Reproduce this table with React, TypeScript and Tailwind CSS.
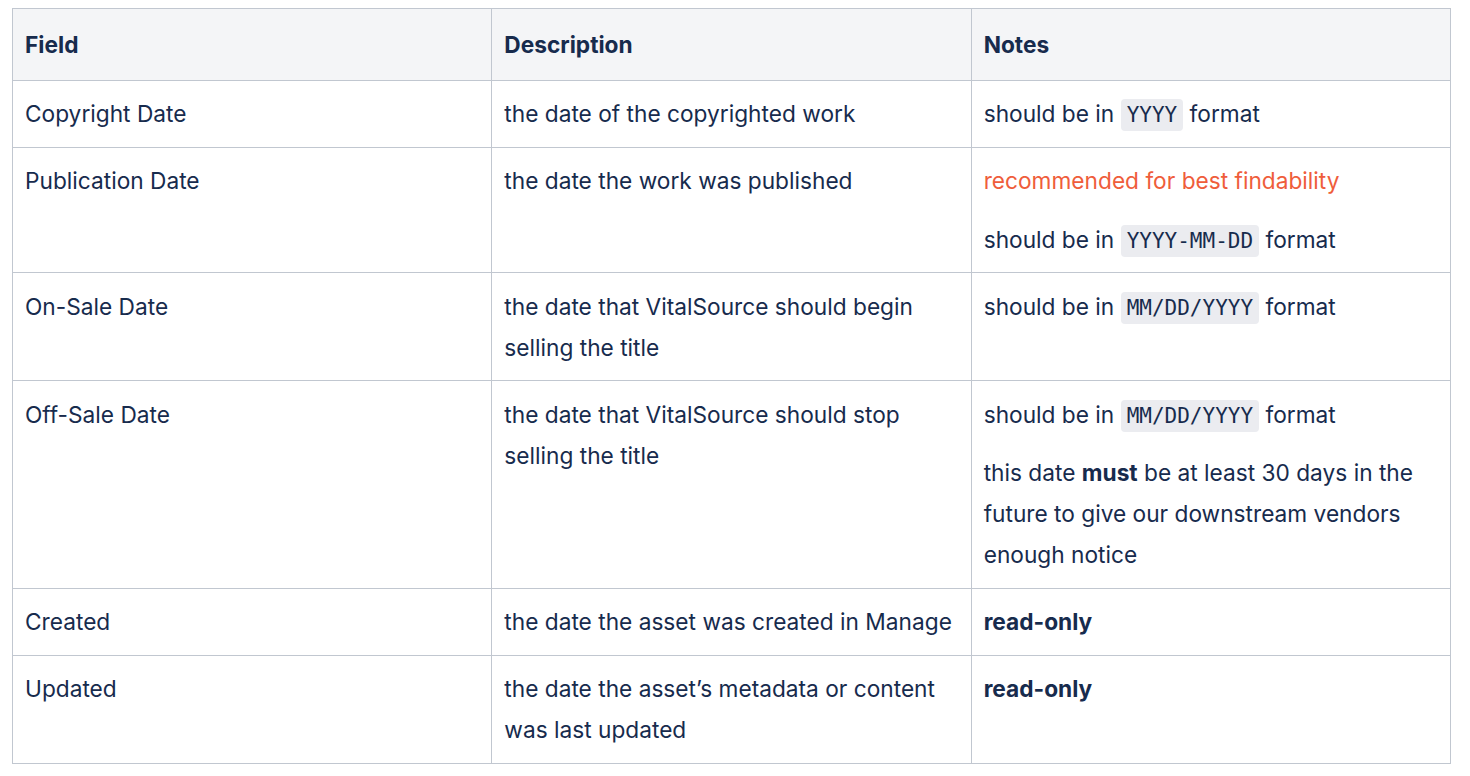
import React from 'react'

// Таблица полей с датами — документация метаданных
const Code = ({ children }: { children: React.ReactNode }) => (
  <code className="rounded-[4px] bg-[#ebecf0] px-[6px] py-[4px] font-['DejaVu_Sans_Mono',monospace] text-[21px] leading-none text-[#172b4d]">
    {children}
  </code>
)

const th = 'border border-[#c1c7d0] bg-[#f4f5f7] px-[12px] py-[14.75px] text-left font-bold'
const td = 'border border-[#c1c7d0] px-[12px] py-[12.5px] align-top'

export default function App() {
  const rows: { field: string; desc: React.ReactNode; notes: React.ReactNode }[] = [
    {
      field: 'Copyright Date',
      desc: 'the date of the copyrighted work',
      notes: (
        <p>
          should be in <Code>YYYY</Code> format
        </p>
      ),
    },
    {
      field: 'Publication Date',
      desc: 'the date the work was published',
      notes: (
        <>
          <p className="text-[#ef5d3b]">recommended for best findability</p>
          <p className="mt-[17.5px]">
            should be in <Code>YYYY-MM-DD</Code> format
          </p>
        </>
      ),
    },
    {
      field: 'On-Sale Date',
      desc: 'the date that VitalSource should begin selling the title',
      notes: (
        <p>
          should be in <Code>MM/DD/YYYY</Code> format
        </p>
      ),
    },
    {
      field: 'Off-Sale Date',
      desc: 'the date that VitalSource should stop selling the title',
      notes: (
        <>
          <p>
            should be in <Code>MM/DD/YYYY</Code> format
          </p>
          <p className="mt-[17.5px]">
            this date <strong>must</strong> be at least 30 days in the future to give our downstream
            vendors enough notice
          </p>
        </>
      ),
    },
    {
      field: 'Created',
      desc: 'the date the asset was created in Manage',
      notes: <strong>read-only</strong>,
    },
    {
      field: 'Updated',
      desc: 'the date the asset’s metadata or content was last updated',
      notes: <strong>read-only</strong>,
    },
  ]

  return (
    <div className="min-h-screen bg-white pl-[12px] pt-[8px] font-['Inter',sans-serif] text-[22.7px] leading-[41px] text-[#172b4d]">
      <table className="w-[1439px] table-fixed border-collapse">
        <thead>
          <tr>
            <th className={th}>Field</th>
            <th className={th}>Description</th>
            <th className={th}>Notes</th>
          </tr>
        </thead>
        <tbody>
          {rows.map((r) => (
            <tr key={r.field}>
              <td className={td}>{r.field}</td>
              <td className={td}>{r.desc}</td>
              <td className={td}>{r.notes}</td>
            </tr>
          ))}
        </tbody>
      </table>
    </div>
  )
}
